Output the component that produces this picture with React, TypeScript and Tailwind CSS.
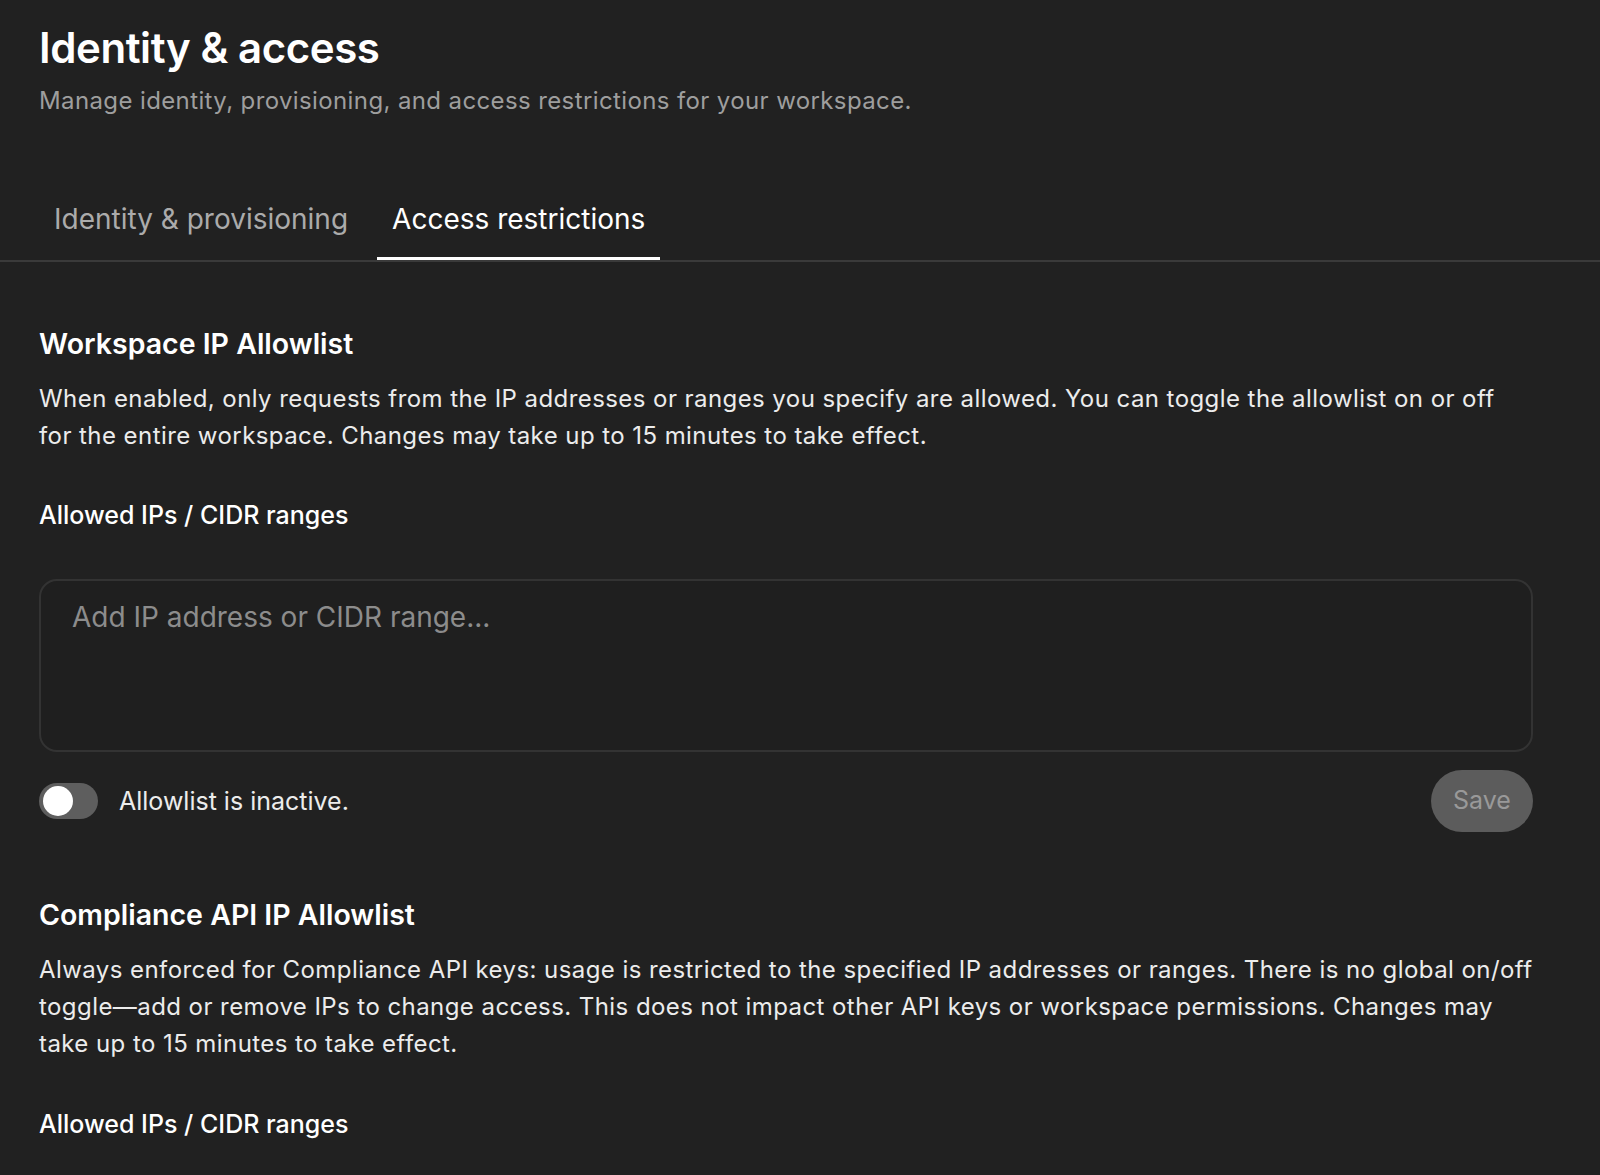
import { useState } from 'react';

const font = { fontFamily: 'Inter, "Noto Sans", "Liberation Sans", sans-serif' };

function Toggle({ on, onChange }: { on: boolean; onChange: (v: boolean) => void }) {
    return (
        <button
            type="button"
            onClick={() => onChange(!on)}
            className={`relative h-[36px] w-[59px] shrink-0 rounded-full transition-colors ${on ? 'bg-[#10a37f]' : 'bg-[#5e5e5e]'}`}
        >
            <span
                className={`absolute top-[3px] h-[30px] w-[30px] rounded-full bg-white transition-all ${on ? 'left-[26px]' : 'left-[4px]'}`}
            />
        </button>
    );
}

// lines are broken where the design breaks them
function Lines({ lines }: { lines: string[] }) {
    return (
        <p className="mt-[19px] text-[24px] leading-[37px] tracking-[0.018em] text-[#ececec]">
            {lines.map((l) => (
                <span key={l} className="block">
                    {l}
                </span>
            ))}
        </p>
    );
}

export default function App() {
    const [tab, setTab] = useState<'identity' | 'access'>('access');
    const [enabled, setEnabled] = useState(false);
    const [ips, setIps] = useState('');

    const tabs = [
        { id: 'identity' as const, label: 'Identity & provisioning' },
        { id: 'access' as const, label: 'Access restrictions' },
    ];

    return (
        <div className="min-h-screen bg-[#212121] text-white" style={font}>
            <div className="pl-[39px] pr-[67px] pt-[22px]">
                <h1 className="text-[42px] font-semibold leading-[52px] tracking-[-0.01em]">Identity &amp; access</h1>
                <p className="mt-[12px] text-[24px] leading-[30px] tracking-[0.016em] text-[#9e9e9e]">
                    Manage identity, provisioning, and access restrictions for your workspace.
                </p>
            </div>

            <div className="mt-[85px] border-b-2 border-[#3a3a3a] pl-[39px]">
                <div className="flex gap-[14px]">
                    {tabs.map((t) => (
                        <button
                            key={t.id}
                            onClick={() => setTab(t.id)}
                            className={`border-b-[3px] px-[15px] pb-[20px] text-[28px] leading-[36px] ${
                                tab === t.id ? 'border-white text-white' : 'border-transparent text-[#ababab]'
                            }`}
                        >
                            {t.label}
                        </button>
                    ))}
                </div>
            </div>

            <div className="pl-[39px] pr-[67px]">
                <section>
                    <h2 className="mt-[65px] text-[28.5px] font-semibold leading-[34px]">Workspace IP Allowlist</h2>
                    <Lines
                        lines={[
                            'When enabled, only requests from the IP addresses or ranges you specify are allowed. You can toggle the allowlist on or off',
                            'for the entire workspace. Changes may take up to 15 minutes to take effect.',
                        ]}
                    />
                    <div className="mt-[45px] text-[25px] font-medium leading-[32px]">Allowed IPs / CIDR ranges</div>
                    <textarea
                        value={ips}
                        onChange={(e) => setIps(e.target.value)}
                        placeholder="Add IP address or CIDR range..."
                        className="mt-[48px] block h-[173px] w-full resize-none rounded-[18px] border-2 border-[#333333] bg-[#1f1f1f] pl-[31px] pr-[31px] pt-[19px] text-[28px] leading-[34px] text-white outline-none placeholder:text-[#8c8c8c]"
                    />
                    <div className="mt-[18px] flex items-center justify-between">
                        <div className="flex items-center gap-[21px]">
                            <Toggle on={enabled} onChange={setEnabled} />
                            <span className="text-[25px] leading-[32px] text-[#ececec]">
                                {enabled ? 'Allowlist is active.' : 'Allowlist is inactive.'}
                            </span>
                        </div>
                        <button
                            disabled={!ips}
                            className="h-[62px] w-[102px] rounded-full bg-[#5c5c5c] text-[25px] text-[#999999]"
                        >
                            Save
                        </button>
                    </div>
                </section>

                <section>
                    <h2 className="mt-[66px] text-[28.5px] font-semibold leading-[34px]">Compliance API IP Allowlist</h2>
                    <Lines
                        lines={[
                            'Always enforced for Compliance API keys: usage is restricted to the specified IP addresses or ranges. There is no global on/off',
                            'toggle—add or remove IPs to change access. This does not impact other API keys or workspace permissions. Changes may',
                            'take up to 15 minutes to take effect.',
                        ]}
                    />
                    <div className="mt-[46px] text-[25px] font-medium leading-[32px]">Allowed IPs / CIDR ranges</div>
                </section>
            </div>
        </div>
    );
}
